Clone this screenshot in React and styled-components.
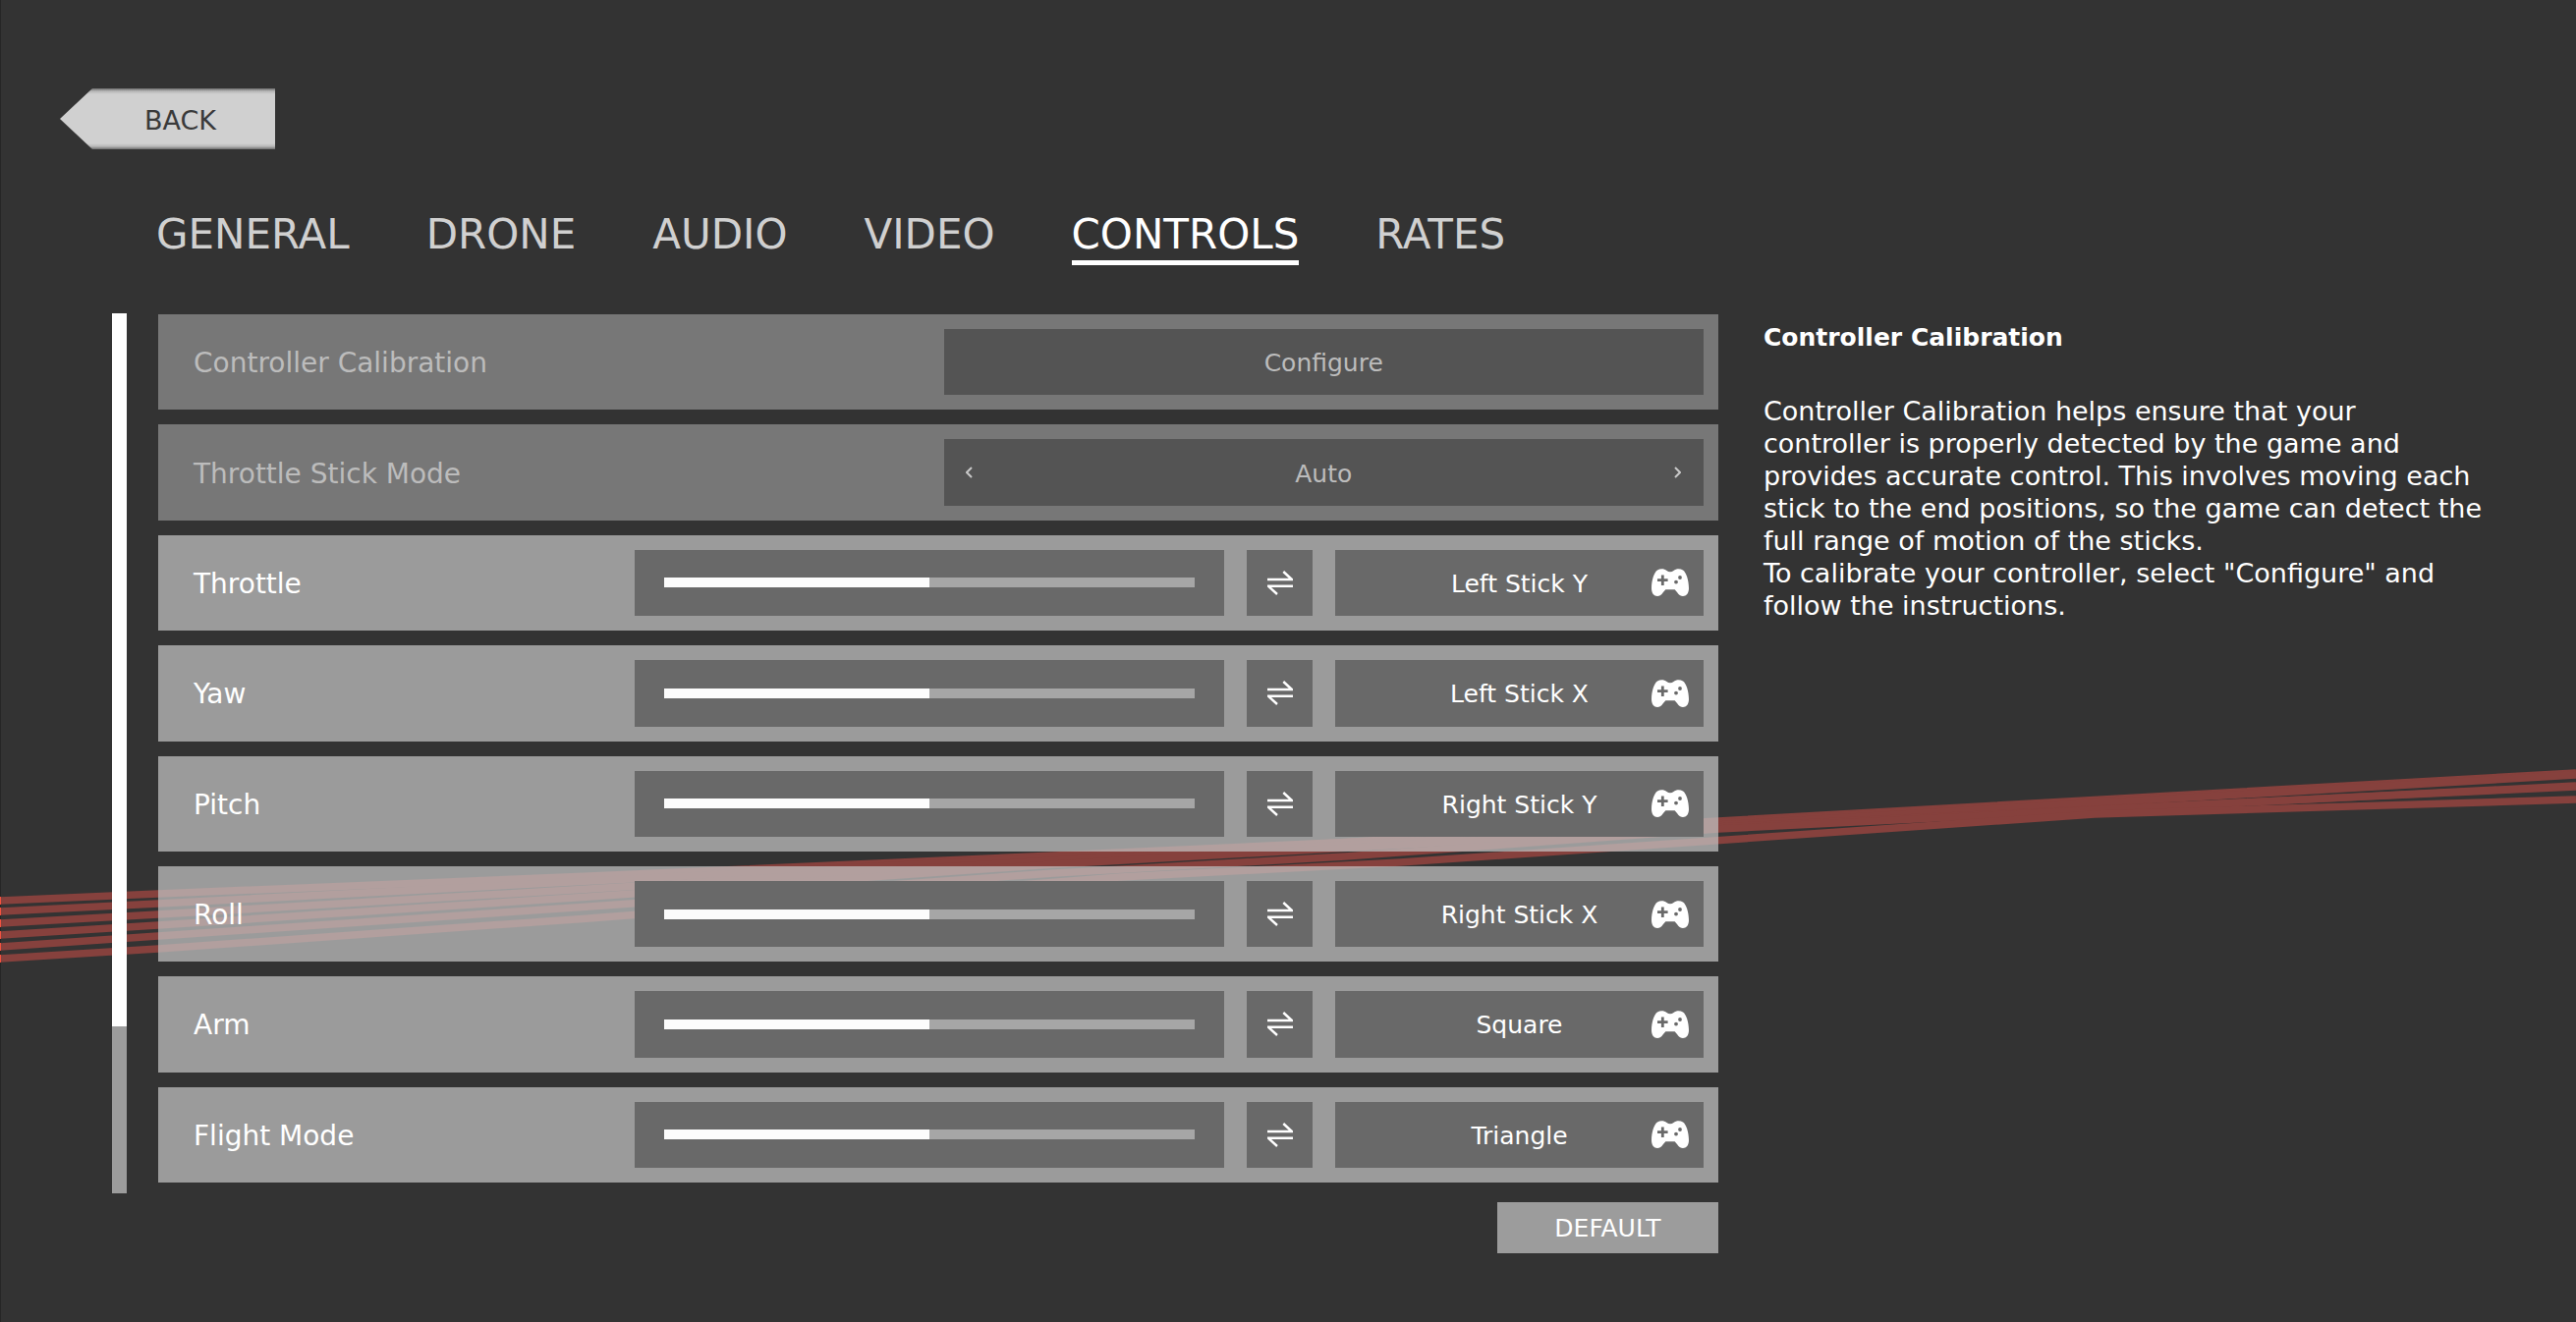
import React, { useState } from "react";
import styled, { createGlobalStyle, css } from "styled-components";

const background = "#333333";
const panel = "#9c9c9c";
const muted = "#bcbcbc";

const GlobalStyle = createGlobalStyle`
  *, *::before, *::after {
    box-sizing: border-box;
  }

  body {
    margin: 0;
    background: ${background};
    color: white;
    font-family: "DejaVu Sans", Verdana, sans-serif;
  }

  button, input {
    font-family: inherit;
    border: none;
    margin: 0;
    padding: 0;
  }

  button:not(:disabled) {
    cursor: pointer;
  }
`;

const Page = styled.div`
  position: relative;
  display: flex;
  flex-direction: column;
  min-height: 100vh;
  padding: 90px 62px 70px 61px;
`;

const Stripes = styled.svg`
  position: absolute;
  inset: 0;
  width: 100%;
  height: 100%;
  z-index: -1;
`;

const BackButton = styled.button`
  align-self: flex-start;
  width: 219px;
  height: 62px;
  padding: 2px 0 0 26px;
  background: linear-gradient(
    #6c6c6c,
    #b8b8b8 3px,
    #d0d0d0 6px,
    #d0d0d0 56px,
    #b8b8b8 59px,
    #6c6c6c
  );
  clip-path: polygon(0 50%, 33px 0, 100% 0, 100% 100%, 33px 100%);
  color: #3a3a3a;
  font-size: 27px;
`;

const Tabs = styled.nav`
  display: flex;
  gap: 78px;
  margin: 63px 0 49px 98px;
`;

const Tab = styled.a`
  padding-bottom: 2px;
  border-bottom: 5px solid ${({ $active }) => ($active ? "white" : "transparent")};
  color: ${({ $active }) => ($active ? "white" : "#d0d0d0")};
  font-size: 42px;
  line-height: 48px;
  text-decoration: none;
`;

const Main = styled.main`
  flex: 1;
  display: grid;
  grid-template-columns: 15px minmax(0, 1620fr) minmax(0, 811fr);
  grid-template-rows: 1fr auto;
  row-gap: 9px;
  padding-left: 53px;
`;

const ScrollTrack = styled.div`
  display: flex;
  flex-direction: column;
  background: ${panel};
`;

const ScrollThumb = styled.div`
  flex-basis: 81%;
  background: white;
`;

const List = styled.div`
  display: grid;
  grid-auto-rows: 1fr;
  row-gap: 15px;
  margin-left: 32px;
  padding: 1px 0 11px;
`;

const Row = styled.div`
  display: grid;
  grid-template-columns: ${({ $disabled }) =>
    $disabled ? "741fr 774fr" : "426fr 600fr 67px 375fr"};
  column-gap: 23px;
  min-height: 97px;
  padding: 15px 15px 15px 36px;
  background: ${({ $disabled }) =>
    $disabled ? "#777777" : "rgba(194, 194, 194, 0.735)"};
  color: ${({ $disabled }) => ($disabled ? muted : "white")};
`;

const Label = styled.label`
  align-self: center;
  padding-top: 2px;
  font-size: 28px;
  line-height: 33px;
`;

const box = css`
  display: flex;
  align-items: center;
  justify-content: center;
  background: #696969;
  color: white;
  font-size: 25px;

  span {
    padding-top: 2px;
  }
`;

const SliderBox = styled.div`
  ${box};
  padding: 0 30px;
`;

const Slider = styled.input`
  appearance: none;
  width: 100%;
  height: 10px;
  background: linear-gradient(
    to right,
    #fcfcfc ${({ value }) => value}%,
    #a6a6a6 ${({ value }) => value}%
  );

  &::-webkit-slider-thumb {
    appearance: none;
    width: 1px;
    height: 10px;
    background: transparent;
  }
`;

const SwapButton = styled.button`
  ${box};
`;

const BindButton = styled.button`
  ${box};
  display: grid;
  grid-template-columns: 38px 1fr 38px;
  padding: 0 15px;

  span {
    grid-column: 2;
  }
`;

const ConfigureButton = styled.button`
  ${box};
  background: #545454;
  color: ${muted};
`;

const Stepper = styled.div`
  ${box};
  justify-content: space-between;
  background: #545454;
  color: ${muted};
`;

const StepButton = styled.button`
  display: flex;
  align-items: center;
  justify-content: center;
  align-self: stretch;
  width: 52px;
  background: none;
  color: #c8c8c8;
`;

const DefaultButton = styled.button`
  grid-column: 2;
  justify-self: end;
  width: 225px;
  height: 52px;
  background: ${panel};
  color: white;
  font-size: 25px;
`;

const Help = styled.aside`
  padding: 8px 28px 0 46px;
  font-size: 27px;
  line-height: 33px;
`;

const HelpTitle = styled.h2`
  margin: 0 0 42px;
  font-size: 25px;
  line-height: 33px;
`;

const HelpText = styled.p`
  margin: 0;
`;

const lines = [
  "0,917 161,910 600,892 1073,871 1359,858 1749,836 2622,787",
  "0,928 161,920 600,897 1073,873 1749,838 2622,788",
  "0,940 161,931 600,905 1073,876 1749,840 2622,789",
  "0,952 161,942 600,913 1073,880 1749,842 2622,801",
  "0,964 161,953 600,923 1073,889 1369,872 1749,844 2622,800",
  "0,976 161,966 600,935 1140,893 1425,878 1643,863 2132,829 2622,814"
];

const tabs = ["GENERAL", "DRONE", "AUDIO", "VIDEO", "CONTROLS", "RATES"];

const bindings = [
  { name: "Throttle", input: "Left Stick Y" },
  { name: "Yaw", input: "Left Stick X" },
  { name: "Pitch", input: "Right Stick Y" },
  { name: "Roll", input: "Right Stick X" },
  { name: "Arm", input: "Square" },
  { name: "Flight Mode", input: "Triangle" }
];

const BackgroundStripes = () => (
  <Stripes viewBox="0 0 2622 1346" preserveAspectRatio="none" aria-hidden="true">
    <g fill="none" stroke="#86413d" strokeWidth="7.5">
      {lines.map(points => (
        <polyline key={points} points={points} />
      ))}
    </g>
    <rect width="1" height="1346" fill="#262626" />
    {lines.map(points => (
      <rect
        key={points}
        y={parseInt(points.split(",")[1], 10) - 4}
        width="1"
        height="8"
        fill="#f0523f"
      />
    ))}
  </Stripes>
);

const SwapIcon = () => (
  <svg width="26" height="25" viewBox="0 0 26 25" aria-hidden="true">
    <path
      d="M0 9H25L16.3 1M26 15.8H1L10 24"
      fill="none"
      stroke="white"
      strokeWidth="2.4"
    />
  </svg>
);

const GamepadIcon = () => (
  <svg width="38" height="28" viewBox="0 0 38 28" aria-hidden="true">
    <path
      d="M0 20C0 12 2.6 3.4 6 1.4C9 -0.4 13 -0.2 15.5 2C17.5 3.7 20.5 3.7 22.5 2C25 -0.2 29 -0.4 32 1.4C35.4 3.4 38 12 38 20C38 25 35.4 28 32 28C27.6 28 26.2 23.4 23.6 21.2H14.4C11.8 23.4 10.4 28 6 28C2.6 28 0 25 0 20Z"
      fill="white"
    />
    <path d="M6 11.7H16.6M11.3 6.4V17" stroke="#696969" strokeWidth="2.8" />
    <circle cx="29" cy="9" r="1.9" fill="#696969" />
    <circle cx="25" cy="13.6" r="1.9" fill="#696969" />
  </svg>
);

const Chevron = ({ d }) => (
  <svg width="7" height="12" viewBox="0 0 7 12" aria-hidden="true">
    <path d={d} fill="none" stroke="currentColor" strokeWidth="2" />
  </svg>
);

const Binding = ({ name, input }) => {
  const [value, setValue] = useState(50);
  const id = name.toLowerCase().replace(" ", "-");

  return (
    <Row>
      <Label htmlFor={id}>{name}</Label>
      <SliderBox>
        <Slider
          id={id}
          type="range"
          min="0"
          max="100"
          value={value}
          onChange={e => setValue(e.target.value)}
        />
      </SliderBox>
      <SwapButton type="button" aria-label={`Invert ${name}`}>
        <SwapIcon />
      </SwapButton>
      <BindButton type="button">
        <span>{input}</span>
        <GamepadIcon />
      </BindButton>
    </Row>
  );
};

const App = () => (
  <>
    <GlobalStyle />
    <Page>
      <BackgroundStripes />
      <BackButton type="button">BACK</BackButton>
      <Tabs>
        {tabs.map(tab => (
          <Tab key={tab} href={`#${tab.toLowerCase()}`} $active={tab === "CONTROLS"}>
            {tab}
          </Tab>
        ))}
      </Tabs>
      <Main>
        <ScrollTrack>
          <ScrollThumb />
        </ScrollTrack>
        <List>
          <Row $disabled>
            <Label htmlFor="calibration">Controller Calibration</Label>
            <ConfigureButton id="calibration" type="button" disabled>
              <span>Configure</span>
            </ConfigureButton>
          </Row>
          <Row $disabled>
            <Label as="span" id="stick-mode">
              Throttle Stick Mode
            </Label>
            <Stepper role="group" aria-labelledby="stick-mode">
              <StepButton type="button" aria-label="Previous" disabled>
                <Chevron d="M6 1L1 6L6 11" />
              </StepButton>
              <span>Auto</span>
              <StepButton type="button" aria-label="Next" disabled>
                <Chevron d="M1 1L6 6L1 11" />
              </StepButton>
            </Stepper>
          </Row>
          {bindings.map(binding => (
            <Binding key={binding.name} {...binding} />
          ))}
        </List>
        <Help>
          <HelpTitle>Controller Calibration</HelpTitle>
          <HelpText>
            Controller Calibration helps ensure that your controller is properly
            detected by the game and provides accurate control. This involves
            moving each stick to the end positions, so the game can detect the
            full range of motion of the sticks.
          </HelpText>
          <HelpText>
            To calibrate your controller, select "Configure" and follow the
            instructions.
          </HelpText>
        </Help>
        <DefaultButton type="button">DEFAULT</DefaultButton>
      </Main>
    </Page>
  </>
);

export default App;
